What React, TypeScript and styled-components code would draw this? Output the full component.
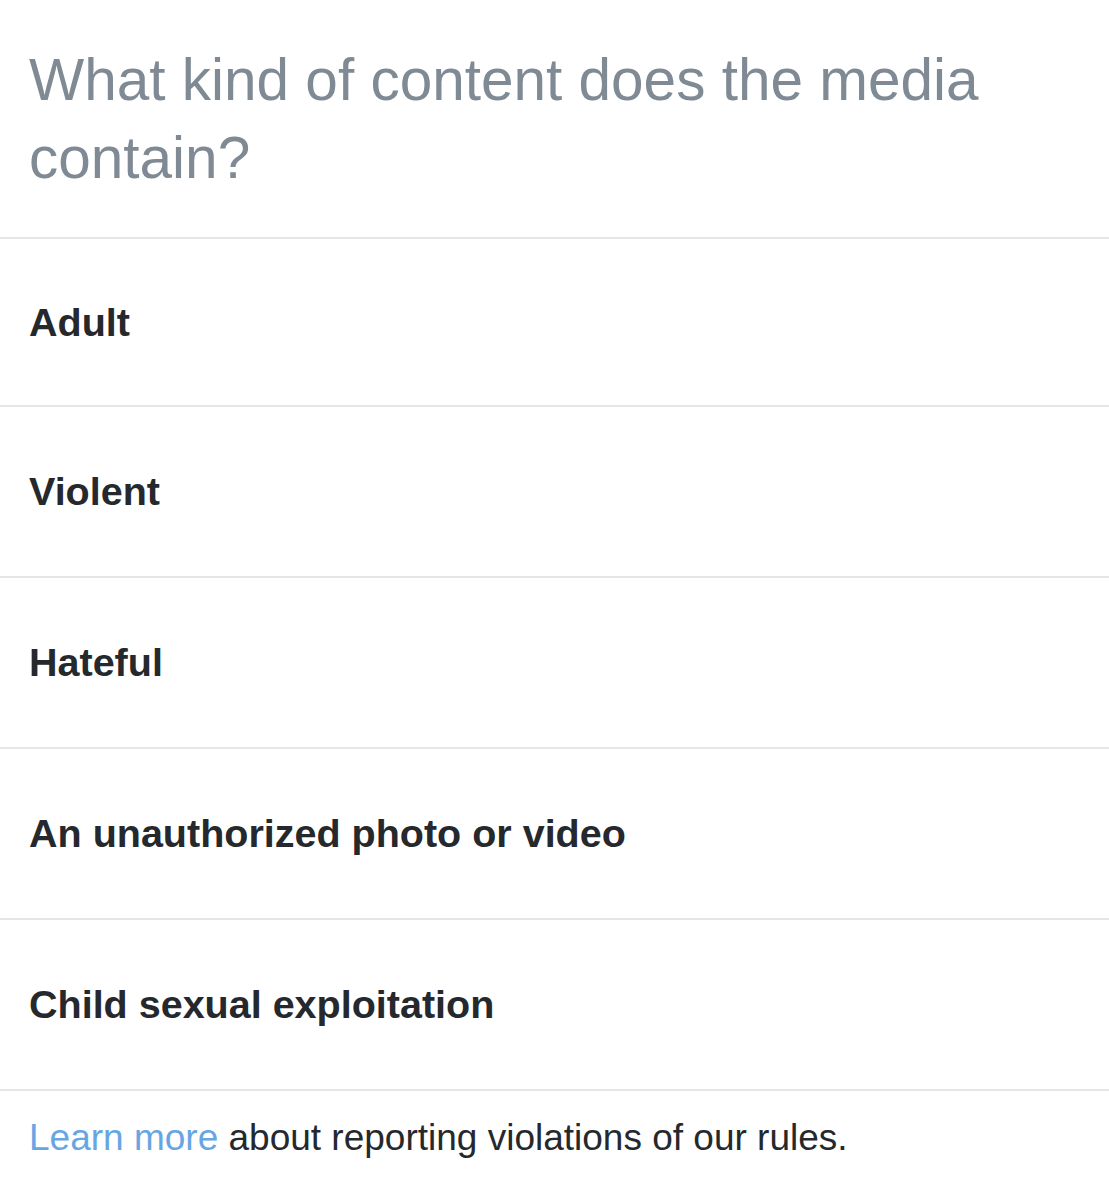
import React from "react";
import styled, { createGlobalStyle } from "styled-components";

const Global = createGlobalStyle`
  html, body { margin: 0; padding: 0; background: #ffffff; }
  body { font-family: "Liberation Sans", Arial, Helvetica, sans-serif; -webkit-font-smoothing: antialiased; }
`;

const Page = styled.div`
  display: flex;
  flex-direction: column;
  width: 1109px;
  background: #ffffff;
`;

const Header = styled.h1`
  margin: 0;
  padding: 41px 30px 40px 29px;
  font-size: 58.5px;
  line-height: 78px;
  font-weight: 400;
  color: #7f8a94;
  border-bottom: 2px solid #e3e7ea;
`;

const Option = styled.div`
  display: flex;
  align-items: center;
  height: 169px;
  padding: 0 29px;
  border-bottom: 2px solid #e3e7ea;
  font-size: 39.5px;
  font-weight: 700;
  color: #25292d;
  cursor: pointer;

  &:first-of-type {
    height: 166px;
  }
`;

const Footer = styled.p`
  margin: 0;
  padding: 25px 29px 0 29px;
  font-size: 37px;
  line-height: 44px;
  color: #25292d;
`;

const Link = styled.a`
  color: #67a6e2;
  text-decoration: none;
`;

const options = [
  "Adult",
  "Violent",
  "Hateful",
  "An unauthorized photo or video",
  "Child sexual exploitation",
];

export default function App() {
  return (
    <>
      <Global />
      <Page>
        <Header>
          What kind of content does the media
          <br />
          contain?
        </Header>
        {options.map((o) => (
          <Option key={o}>{o}</Option>
        ))}
        <Footer>
          <Link href="#">Learn more</Link> about reporting violations of our rules.
        </Footer>
      </Page>
    </>
  );
}
